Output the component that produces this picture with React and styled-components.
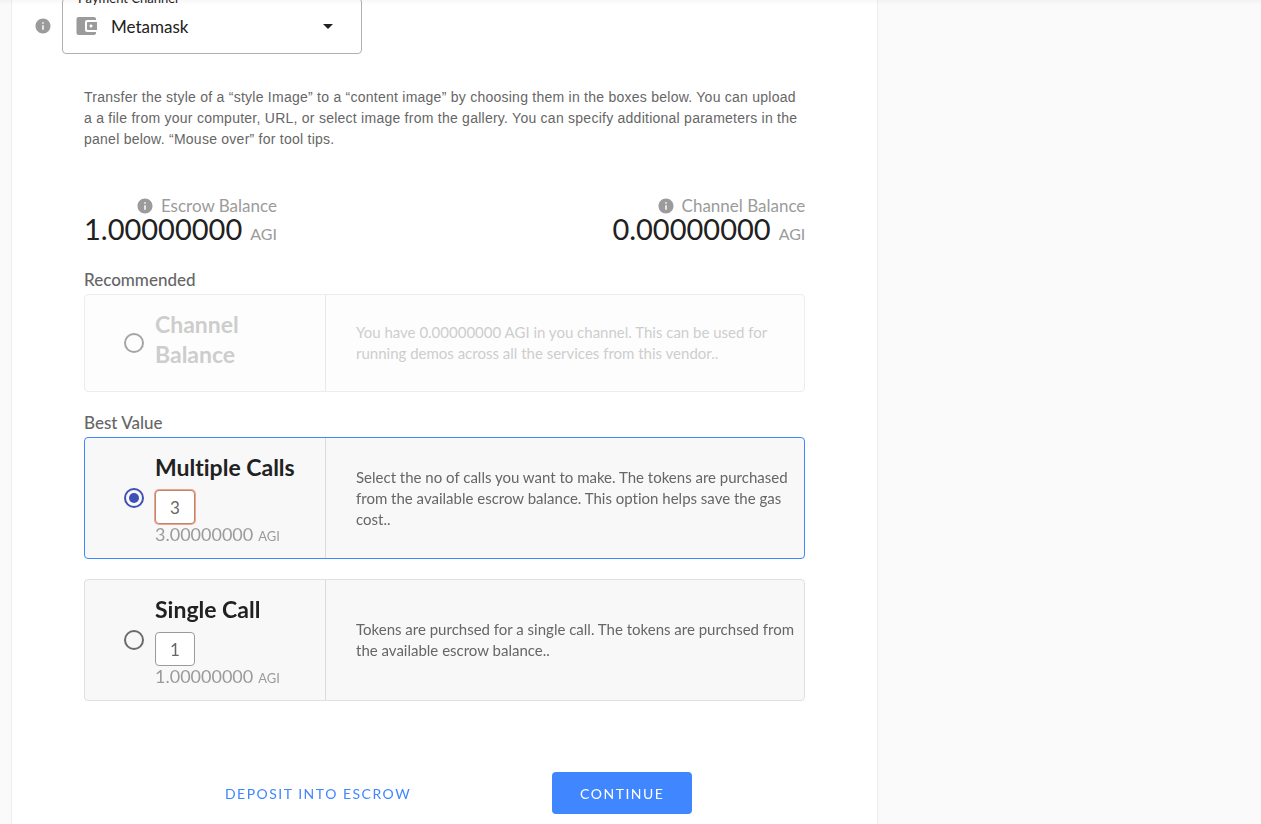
import React, { useState } from "react";
import styled, { createGlobalStyle } from "styled-components";

const GlobalStyle = createGlobalStyle`
  * { box-sizing: border-box; }
  body {
    margin: 0;
    background: #fafafa;
    font-family: Lato, "Open Sans", sans-serif;
    font-variant-ligatures: none;
    color: #212121;
  }
  p, h3 { margin: 0; }
`;

const Page = styled.div`
  position: relative;
  display: grid;
  grid-template-columns: minmax(0, 34fr) minmax(0, 15fr);
  min-height: 100vh;
  padding-left: 11px;
  overflow: hidden;
`;

const HeaderShade = styled.div`
  position: absolute;
  inset: 0 0 auto;
  height: 5px;
  background: linear-gradient(rgba(0, 0, 0, 0.03), rgba(0, 0, 0, 0));
`;

const Panel = styled.main`
  background: #fff;
  border: 1px solid #ececec;
  border-width: 0 1px;
  padding: 0 72px 10px;
`;

const ChannelRow = styled.div`
  display: flex;
  align-items: center;
  gap: 10px;
  height: 56px;
  margin: -2px 0 0 -50px;
`;

const Icon = styled.svg`
  display: block;
  flex: none;
  width: ${(p) => p.$size}px;
  height: ${(p) => p.$size}px;
  fill: #9b9b9b;
`;

const SelectBox = styled.div`
  position: relative;
  display: flex;
  align-items: center;
  width: 300px;
  height: 56px;
  padding: 0 21px 0 12px;
  border: 1px solid #b0b0b0;
  border-radius: 4px;
`;

const FloatingLabel = styled.label`
  position: absolute;
  top: -9px;
  left: 10px;
  padding: 0 5px;
  background: #fff;
  font-size: 13px;
  line-height: 16px;
`;

const ChannelSelect = styled.select`
  flex: 1;
  height: 40px;
  margin-left: 12px;
  padding: 0;
  border: 0;
  outline: 0;
  appearance: none;
  background: transparent;
  color: #212121;
  font-family: inherit;
  font-size: 17px;
`;

const Intro = styled.p`
  margin-top: 33px;
  color: #666;
  font-family: "Liberation Sans", Arial, sans-serif;
  font-size: 14px;
  line-height: 21px;
  letter-spacing: 0.25px;
`;

const Balances = styled.div`
  display: flex;
  justify-content: space-between;
  margin-top: 46px;
  padding-bottom: 2px;
`;

const Balance = styled.div`
  display: flex;
  flex-direction: column;
  align-items: flex-end;
`;

const BalanceName = styled.div`
  display: flex;
  align-items: center;
  gap: 7px;
  color: #9b9b9b;
  font-size: 17px;
  line-height: 20px;
`;

const BalanceValue = styled.div`
  display: flex;
  align-items: baseline;
  gap: 8px;
  font-size: 29px;
  line-height: 26px;
`;

const BalanceUnit = styled.span`
  color: #9b9b9b;
  font-size: 16px;
`;

const Plan = styled.section`
  margin-top: 20px;
`;

const PlanLabel = styled.p`
  padding-bottom: 4px;
  color: #666;
  font-size: 17px;
  font-weight: 500;
  line-height: 21px;
`;

const Card = styled.div`
  display: grid;
  grid-template-columns: 241px minmax(0, 1fr);
  border: 1px solid ${(p) => (p.$selected ? "#4086ff" : "#e0e0e0")};
  border-radius: 4px;
  background: ${(p) => (p.$disabled ? "#fdfdfd" : "#f8f8f8")};
  opacity: ${(p) => (p.$disabled ? 0.6 : 1)};
`;

const Choice = styled.div`
  display: flex;
  align-items: center;
  gap: 11px;
  padding: 14px 10px 14px 39px;
  border-right: 1px solid #dcdcdc;
`;

const Radio = styled.input`
  appearance: none;
  flex: none;
  width: 20px;
  height: 20px;
  margin: 0;
  padding: 3px;
  border: 2px solid #6b6b6b;
  border-radius: 50%;
  background: transparent content-box;
  &:checked {
    border-color: #3f51b5;
    background-color: #3f51b5;
  }
`;

const ChoiceTitle = styled.label`
  display: block;
  margin-bottom: 8px;
  color: ${(p) => (p.$disabled ? "#acacac" : "#212121")};
  font-size: 23px;
  font-weight: 700;
  line-height: 30px;
`;

const CallCount = styled.input`
  display: block;
  width: 40px;
  height: 34px;
  padding: 0;
  border: 1px solid #9b9b9b;
  border-radius: 4px;
  outline: 0;
  background: #fff;
  color: #666;
  font-family: inherit;
  font-size: 17px;
  text-align: center;
  &:focus {
    border-color: #b98673;
    box-shadow: 0 0 0 1px #f0a58a;
  }
`;

const Price = styled.div`
  display: flex;
  align-items: baseline;
  gap: 5px;
  height: 20px;
  color: #9b9b9b;
  font-size: 18px;
  line-height: 20px;
`;

const PriceUnit = styled.span`
  font-size: 13px;
`;

const Description = styled.p`
  align-self: center;
  padding: 0 6px 0 30px;
  color: ${(p) => (p.$disabled ? "#acacac" : "#666")};
  font-size: 15px;
  line-height: 21px;
`;

const Actions = styled.div`
  display: flex;
  justify-content: space-evenly;
  margin-top: 71px;
`;

const ActionButton = styled.button`
  height: 42px;
  padding: 0 28px;
  border: 0;
  border-radius: 4px;
  background: ${(p) => (p.$filled ? "#4086ff" : "transparent")};
  color: ${(p) => (p.$filled ? "#fff" : "#4086ff")};
  font-family: inherit;
  font-size: 14px;
  letter-spacing: 1.5px;
  text-transform: uppercase;
`;

function InfoIcon() {
  return (
    <Icon $size={18} viewBox="0 0 24 24" aria-hidden="true">
      <path d="M12 2C6.48 2 2 6.48 2 12s4.48 10 10 10 10-4.48 10-10S17.52 2 12 2zm1 15h-2v-6h2v6zm0-8h-2V7h2v2z" />
    </Icon>
  );
}

function BalanceItem({ name, value }) {
  return (
    <Balance>
      <BalanceName>
        <InfoIcon />
        {name}
      </BalanceName>
      <BalanceValue>
        {value}
        <BalanceUnit>AGI</BalanceUnit>
      </BalanceValue>
    </Balance>
  );
}

const plans = [
  {
    id: "channel",
    label: "Recommended",
    title: "Channel Balance",
    disabled: true,
    text: "You have 0.00000000 AGI in you channel. This can be used for running demos across all the services from this vendor..",
  },
  {
    id: "multiple",
    label: "Best Value",
    title: "Multiple Calls",
    count: 3,
    text: "Select the no of calls you want to make. The tokens are purchased from the available escrow balance. This option helps save the gas cost..",
  },
  {
    id: "single",
    title: "Single Call",
    count: 1,
    text: "Tokens are purchsed for a single call. The tokens are purchsed from the available escrow balance..",
  },
];

function PlanItem({ plan, selected, onSelect }) {
  const [count, setCount] = useState(String(plan.count ?? ""));
  return (
    <Plan>
      {plan.label && <PlanLabel>{plan.label}</PlanLabel>}
      <Card $selected={selected} $disabled={plan.disabled}>
        <Choice>
          <Radio
            type="radio"
            name="plan"
            id={plan.id}
            checked={selected}
            disabled={plan.disabled}
            onChange={onSelect}
          />
          <div>
            <ChoiceTitle htmlFor={plan.id} $disabled={plan.disabled}>
              {plan.title}
            </ChoiceTitle>
            {plan.count && (
              <>
                <CallCount
                  type="text"
                  aria-label={`${plan.title} count`}
                  value={count}
                  autoFocus={plan.id === "multiple"}
                  readOnly={plan.id === "single"}
                  onChange={(e) => setCount(e.target.value)}
                />
                <Price>
                  {Number(count || 0).toFixed(8)}
                  <PriceUnit>AGI</PriceUnit>
                </Price>
              </>
            )}
          </div>
        </Choice>
        <Description $disabled={plan.disabled}>{plan.text}</Description>
      </Card>
    </Plan>
  );
}

export default function App() {
  const [selected, setSelected] = useState("multiple");
  return (
    <>
      <GlobalStyle />
      <Page>
        <Panel>
          <ChannelRow>
            <InfoIcon />
            <SelectBox>
              <FloatingLabel htmlFor="payment-channel">Payment Channel</FloatingLabel>
              <Icon $size={24} viewBox="0 0 24 24" aria-hidden="true">
                <path d="M10 16V8c0-1.100.9-2 2-2h9V5c0-1.100-.9-2-2-2H3.500C2.400 3 1.500 3.900 1.500 5v14c0 1.100.9 2 2 2H19c1.100 0 2-.9 2-2v-1h-9c-1.100 0-2-.9-2-2zm3-8c-.55 0-1 .45-1 1v6c0 .55.45 1 1 1h9V8h-9zm3 5.500c-.83 0-1.500-.67-1.500-1.500s.67-1.500 1.500-1.500 1.500.67 1.500 1.500-.67 1.500-1.500 1.500z" />
              </Icon>
              <ChannelSelect id="payment-channel" defaultValue="metamask">
                <option value="metamask">Metamask</option>
              </ChannelSelect>
              <svg width="24" height="24" viewBox="0 0 24 24" fill="#212121" aria-hidden="true">
                <path d="M7 10l5 5 5-5z" />
              </svg>
            </SelectBox>
          </ChannelRow>
          <Intro>
            Transfer the style of a “style Image” to a “content image” by choosing them in the boxes
            below. You can upload a a file from your computer, URL, or select image from the gallery.
            You can specify additional parameters in the panel below. “Mouse over” for tool tips.
          </Intro>
          <Balances>
            <BalanceItem name="Escrow Balance" value="1.00000000" />
            <BalanceItem name="Channel Balance" value="0.00000000" />
          </Balances>
          {plans.map((plan) => (
            <PlanItem
              key={plan.id}
              plan={plan}
              selected={selected === plan.id}
              onSelect={() => setSelected(plan.id)}
            />
          ))}
          <Actions>
            <ActionButton type="button">Deposit into Escrow</ActionButton>
            <ActionButton type="button" $filled>
              Continue
            </ActionButton>
          </Actions>
        </Panel>
        <HeaderShade />
      </Page>
    </>
  );
}
